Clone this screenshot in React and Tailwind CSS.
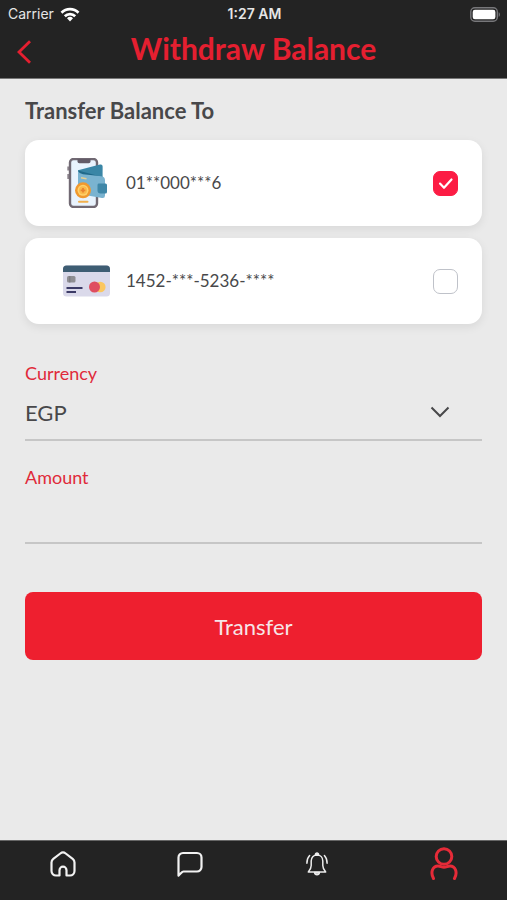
import { useState } from "react";

const METHODS = [
  { id: "wallet", label: "01**000***6", icon: WalletIcon },
  { id: "card", label: "1452-***-5236-****", icon: CardIcon },
];

export default function App() {
  const [selected, setSelected] = useState("wallet");

  return (
    <div className="flex min-h-screen flex-col bg-[#eaeaea] font-['Lato',sans-serif] text-[#48484a]">
      <header className="border-b border-[#777] bg-[#232323]">
        <StatusBar />
        <div className="grid h-[50px] grid-cols-[48px_1fr_48px] pb-2">
          <button type="button" aria-label="Back" className="flex items-center pt-1.5 pl-4">
            <svg width="16" height="24" viewBox="0 0 16 24" fill="none" stroke="#e51f30" strokeWidth="2.8">
              <path d="M14 1.2 3 12l11 10.8" />
            </svg>
          </button>
          <h1 className="text-center text-[30px] leading-10 font-bold text-[#e51f30]">Withdraw Balance</h1>
        </div>
      </header>

      <main className="flex-1 px-[25px] pt-4">
        <h2 className="text-[22px] leading-8 font-bold">Transfer Balance To</h2>

        {/* Payout methods */}
        <div className="mt-[13px] flex flex-col gap-3">
          {METHODS.map((m) => (
            <MethodRow key={m.id} method={m} checked={selected === m.id} onSelect={() => setSelected(m.id)} />
          ))}
        </div>

        <form onSubmit={(e) => e.preventDefault()}>
          <div className="mt-[37px]">
            <label htmlFor="currency" className="block text-lg leading-6 text-[#e02a3a]">
              Currency
            </label>
            <div className="relative border-b-2 border-[#c6c6c6]">
              <select id="currency" className="h-[54px] w-full appearance-none bg-transparent text-[22px] outline-none">
                <option>EGP</option>
              </select>
              <svg
                className="pointer-events-none absolute top-[21px] right-8"
                width="20"
                height="12"
                viewBox="0 0 20 12"
                fill="none"
                stroke="#48484a"
                strokeWidth="2"
              >
                <path d="m1.5 1.5 8.500 8.500 8.500-8.500" />
              </svg>
            </div>
          </div>

          <div className="mt-6">
            <label htmlFor="amount" className="block text-lg leading-6 text-[#e02a3a]">
              Amount
            </label>
            <input
              id="amount"
              type="text"
              inputMode="decimal"
              className="block h-[55px] w-full border-b-2 border-[#c6c6c6] bg-transparent text-[22px] outline-none"
            />
          </div>

          <button type="submit" className="mt-12 h-[68px] w-full rounded-lg bg-[#ee1f2f] text-[22px] text-[#f6e6e8]">
            Transfer
          </button>
        </form>
      </main>

      <BottomNav />
    </div>
  );
}

function StatusBar() {
  return (
    <div className="grid h-7 grid-cols-3 items-center pr-1.5 pl-2 font-['Inter',sans-serif] text-sm text-[#e6e6e6]">
      <div className="flex items-center gap-1.5">
        Carrier
        <svg width="20" height="15" viewBox="0 0 20 15" fill="none" stroke="#fff" strokeWidth="2.7">
          <path d="M1.500 5.700a12 12 0 0 1 17 0" />
          <path d="M4.800 9.200a7.400 7.400 0 0 1 10.400 0" />
          <path d="M10 14.500 7 11.300a4.300 4.300 0 0 1 6 0Z" fill="#fff" stroke="none" />
        </svg>
      </div>
      <span className="text-center font-semibold">1:27 AM</span>
      <svg className="justify-self-end" width="31" height="15" viewBox="0 0 31 15">
        <rect x="0.8" y="0.8" width="26.5" height="13.4" rx="4" fill="none" stroke="#77777a" strokeWidth="1.4" />
        <rect x="2.7" y="2.7" width="22.7" height="9.6" rx="2.2" fill="#fff" />
        <path d="M28.700 5.200c1.600.6 1.600 4 0 4.600Z" fill="#77777a" />
      </svg>
    </div>
  );
}

function MethodRow({ method, checked, onSelect }) {
  const Icon = method.icon;
  return (
    <label className="flex h-[86px] items-center gap-4 rounded-[14px] bg-white pr-6 pl-[37px] shadow-[0_3px_10px_rgba(0,0,0,0.08)]">
      <Icon />
      <span className="flex-1 text-[17px]">{method.label}</span>
      <span className="relative size-[25px]">
        <input
          type="checkbox"
          checked={checked}
          onChange={onSelect}
          className="block size-[25px] appearance-none rounded-[7px] border border-[#bfc2c9] bg-white checked:border-[#fc1c44] checked:bg-[#fc1c44]"
        />
        {checked && (
          <svg
            className="pointer-events-none absolute inset-0"
            width="25"
            height="25"
            viewBox="0 0 25 25"
            fill="none"
            stroke="#fff"
            strokeWidth="2.2"
            strokeLinecap="round"
            strokeLinejoin="round"
          >
            <path d="m7 12.600 4 4.200L18.500 8.500" />
          </svg>
        )}
      </span>
    </label>
  );
}

function WalletIcon() {
  return (
    <svg width="48" height="50" viewBox="0 0 48 50" aria-hidden="true">
      <path d="M5.300 8.500h2.500v4H5.300zM5.300 16h2.500v5H5.300z" fill="#8f8790" />
      <rect x="8" y="1" width="27" height="48" rx="3.5" fill="#e9f3fd" stroke="#716973" strokeWidth="2.4" />
      <path d="M15.500 1h13v2.500a1.800 1.800 0 0 1-1.800 1.800h-9.400a1.800 1.800 0 0 1-1.800-1.800Z" fill="#635b67" />
      <path d="m16 12.200 22-5.700q2.600-.6 2.600 2v12L16 18Z" fill="#3a86a6" />
      <path d="m16 12.500 24.500 6.500v1.500L18 17Z" fill="#20698a" />
      <path d="M16 13.200q1.500 2.500 5 3l18.500 2q3.500.6 3.500 4V37.500q0 3-3 2.500L18.500 36.300q-2.500-.5-2.500-3Z" fill="#7ab3d0" />
      <path d="M36.500 25.500h7q1.500 0 1.500 1.500v7q0 1.500-1.500 1.500h-5q-3 0-3-3v-5q0-2 1-2Z" fill="#3f87a8" />
      <path d="m19 19.800 5.500 1" stroke="#e8cf91" strokeWidth="1.5" />
      <circle cx="21" cy="32.3" r="8" fill="#f0992f" />
      <circle cx="21" cy="32.3" r="5.5" fill="#ffd16b" />
      <circle cx="21" cy="32.3" r="4" fill="#faba4c" />
      <path d="M21 30v4.600M18.700 32.300h4.600" stroke="#e98330" strokeWidth="1.8" />
      <path d="M17 43.800h8.500" stroke="#f1b04d" strokeWidth="2" strokeLinecap="round" />
    </svg>
  );
}

function CardIcon() {
  return (
    <svg width="48" height="32" viewBox="0 0 48 32" aria-hidden="true">
      <rect x="1" y="0.5" width="47" height="31" rx="3.5" fill="#dad9ea" />
      <path d="M1 7V4A3.500 3.500 0 0 1 4.500.500h40A3.500 3.500 0 0 1 48 4v3Z" fill="#3e5d73" />
      <rect x="5" y="11" width="8.5" height="6.5" rx="1.5" fill="#8e8d92" />
      <path d="M7.800 11v6.500" stroke="#77767d" />
      <path d="M4.500 23h16M4.500 27h9.500" stroke="#3c3b67" strokeWidth="2" />
      <circle cx="38.3" cy="22" r="5.3" fill="#fbc760" />
      <circle cx="32.5" cy="22" r="5.5" fill="#df4d60" />
    </svg>
  );
}

function BottomNav() {
  return (
    <nav className="grid h-[60px] grid-cols-4 border-t border-[#666] bg-[#232323] pb-3.5">
      <a href="#home" aria-label="Home" className="flex items-center justify-center">
        <svg width="26" height="26" viewBox="0 0 26 26" fill="none" stroke="#f2f2f2" strokeWidth="2.2" strokeLinejoin="round">
          <path d="M9.500 24.500H6a4.500 4.500 0 0 1-4.500-4.500v-8.500c0-1.500.6-2.700 1.800-3.600l7-5.400a4.400 4.400 0 0 1 5.400 0l7 5.400a4.500 4.500 0 0 1 1.800 3.600V20a4.500 4.500 0 0 1-4.500 4.500h-3.500v-5.300a3.500 3.500 0 0 0-7 0Z" />
        </svg>
      </a>
      <a href="#messages" aria-label="Messages" className="flex items-center justify-center">
        <svg width="26" height="26" viewBox="0 0 26 26" fill="none" stroke="#f2f2f2" strokeWidth="2.2" strokeLinejoin="round">
          <path d="M1.500 24.500V6.500A4.500 4.500 0 0 1 6 2h14a4.500 4.500 0 0 1 4.500 4.500V16a4.500 4.500 0 0 1-4.500 4.500H6.500c-1.500 0-3 2.500-5 4Z" />
        </svg>
      </a>
      <a href="#notifications" aria-label="Notifications" className="flex items-center justify-center">
        <svg width="22" height="24" viewBox="0 0 22 24" fill="none" stroke="#ececec" strokeWidth="1.5" strokeLinecap="round" strokeLinejoin="round">
          <path d="M11 3c-3.600 0-5.800 2.500-5.800 6v4.500c0 2.500-.9 4.300-2.900 6.400h17.400c-2-2.100-2.900-3.900-2.900-6.400V9c0-3.500-2.200-6-5.800-6Z" />
          <path d="M9.500 2.800c-.3-2.400 3.300-2.400 3 0Z" fill="#ececec" />
          <path d="M8.500 20.500c.4 3 4.600 3 5 0Z" fill="#bbb" />
          <path d="M3.600 3.500C1.900 5.300.9 7.800.9 11.200M18.400 3.500c1.700 1.800 2.700 4.300 2.700 7.700" />
        </svg>
      </a>
      <a href="#profile" aria-label="Profile" className="flex items-center justify-center">
        <svg width="28" height="34" viewBox="0 0 28 34" fill="none" stroke="#e62b38" strokeWidth="3" strokeLinecap="round">
          <circle cx="14" cy="9.5" r="7.8" />
          <path d="M3.500 31.500c-3.500-6.500-.6-12.500 4.500-12.500 2.400 0 3.600 1.300 6 1.300s3.600-1.300 6-1.300c5.100 0 8 6 4.500 12.500" />
        </svg>
      </a>
    </nav>
  );
}
